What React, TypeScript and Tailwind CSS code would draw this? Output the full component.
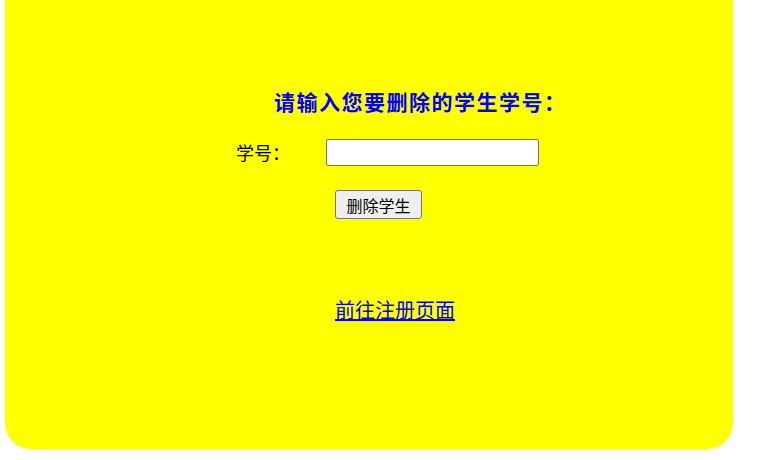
import React from 'react';

export default function App() {
  return (
    <div className="min-h-[460px] bg-white pl-[5px] pr-[46px]">
      <div
        className="h-[449px] bg-[#ffff00] rounded-b-[26px] flex flex-col items-start"
        style={{ fontFamily: '"Noto Sans CJK SC", "Noto Sans", sans-serif' }}
      >
        {/* Title */}
        <h2 className="mt-[86px] ml-[269px] text-[21px] leading-[30px] font-bold text-[#0000ff] tracking-[1.5px]">
          请输入您要删除的学生学号：
        </h2>

        {/* Student id row */}
        <div className="mt-[23px] ml-[231px] flex items-center h-[27px]">
          <label className="w-[90px] text-[18px] leading-[27px] text-black">学号：</label>
          <input
            type="text"
            className="w-[213px] h-[27px] bg-white border border-[#767676] rounded-[2px] px-1 text-[14px] outline-none"
          />
        </div>

        {/* Submit */}
        <button className="mt-[24px] ml-[330px] w-[87px] h-[29px] bg-[#efefef] border border-[#767676] rounded-[3px] text-[16px] leading-[20px] text-black">
          删除学生
        </button>

        {/* Register link */}
        <a
          href="#"
          className="mt-[78px] ml-[330px] text-[20px] leading-[26px] text-[#0000ff] underline"
        >
          前往注册页面
        </a>
      </div>
    </div>
  );
}
